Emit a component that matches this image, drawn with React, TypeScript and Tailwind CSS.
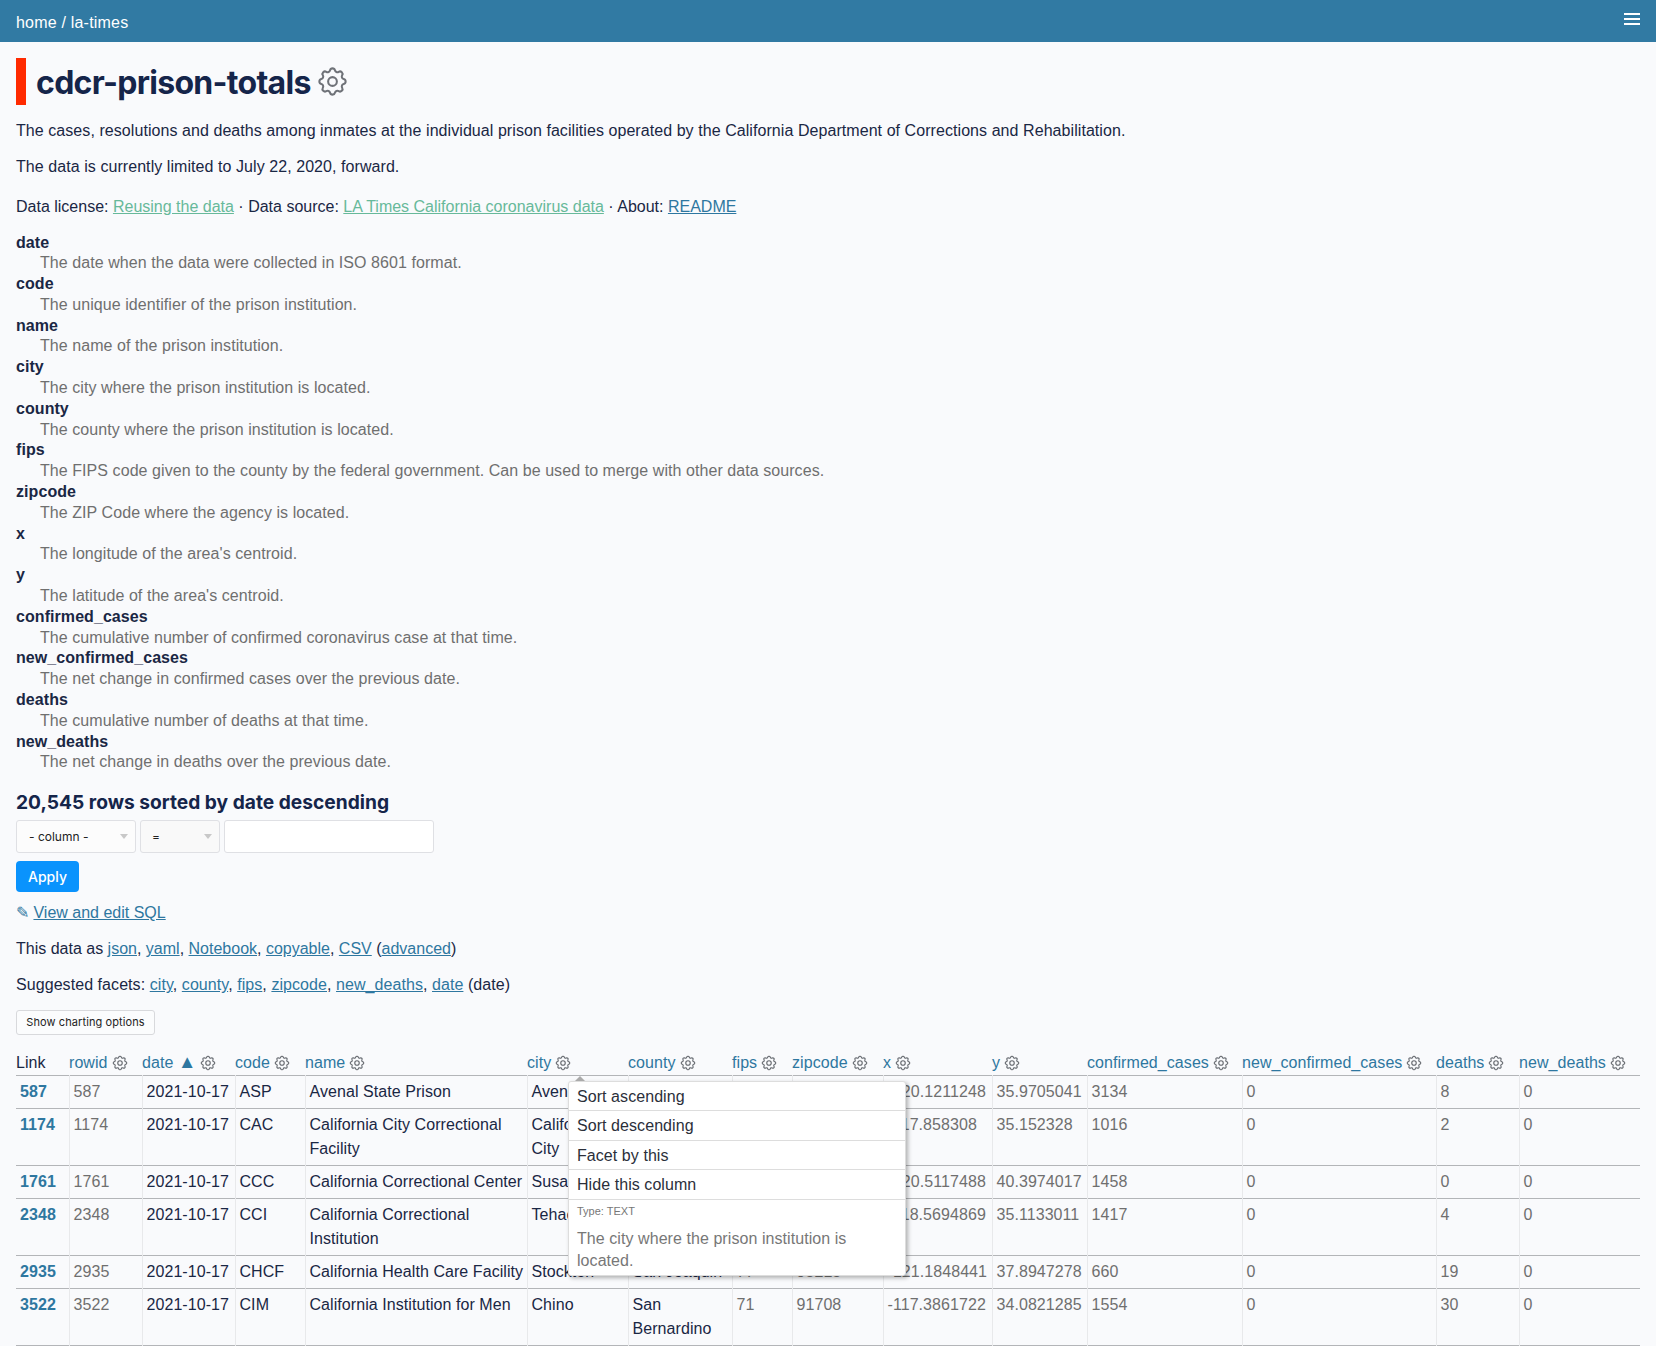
import React from "react";

const Gear = ({ className, sw = 1.5 }: { className: string; sw?: number }) => (
  <svg className={className} viewBox="0 0 24 24" fill="none" stroke="currentColor" strokeWidth={sw} strokeLinecap="round" strokeLinejoin="round">
    <path d="M10.325 4.317c.426-1.756 2.924-1.756 3.35 0a1.724 1.724 0 002.573 1.066c1.543-.94 3.31.826 2.37 2.37a1.724 1.724 0 001.065 2.572c1.756.426 1.756 2.924 0 3.35a1.724 1.724 0 00-1.066 2.573c.94 1.543-.826 3.31-2.37 2.37a1.724 1.724 0 00-2.572 1.065c-.426 1.756-2.924 1.756-3.35 0a1.724 1.724 0 00-2.573-1.066c-1.543.94-3.31-.826-2.37-2.37a1.724 1.724 0 00-1.065-2.572c-1.756-.426-1.756-2.924 0-3.35a1.724 1.724 0 001.066-2.573c-.94-1.543.826-3.31 2.37-2.37.996.608 2.296.07 2.572-1.065z" />
    <circle cx="12" cy="12" r="3" />
  </svg>
);

const cols: [string, string][] = [
  ["date", "The date when the data were collected in ISO 8601 format."],
  ["code", "The unique identifier of the prison institution."],
  ["name", "The name of the prison institution."],
  ["city", "The city where the prison institution is located."],
  ["county", "The county where the prison institution is located."],
  ["fips", "The FIPS code given to the county by the federal government. Can be used to merge with other data sources."],
  ["zipcode", "The ZIP Code where the agency is located."],
  ["x", "The longitude of the area's centroid."],
  ["y", "The latitude of the area's centroid."],
  ["confirmed_cases", "The cumulative number of confirmed coronavirus case at that time."],
  ["new_confirmed_cases", "The net change in confirmed cases over the previous date."],
  ["deaths", "The cumulative number of deaths at that time."],
  ["new_deaths", "The net change in deaths over the previous date."],
];

const headers = ["rowid", "date", "code", "name", "city", "county", "fips", "zipcode", "x", "y", "confirmed_cases", "new_confirmed_cases", "deaths", "new_deaths"];
const widths = [53, 73, 93, 70, 222, 101, 104, 60, 91, 109, 95, 155, 194, 83, 121];

const rows = [
  ["587", "587", "2021-10-17", "ASP", "Avenal State Prison", "Avenal", "Kings", "31", "93204", "-120.1211248", "35.9705041", "3134", "0", "8", "0"],
  ["1174", "1174", "2021-10-17", "CAC", "California City Correctional Facility", "California City", "Kern", "29", "93505", "-117.858308", "35.152328", "1016", "0", "2", "0"],
  ["1761", "1761", "2021-10-17", "CCC", "California Correctional Center", "Susanville", "Lassen", "35", "96127", "-120.5117488", "40.3974017", "1458", "0", "0", "0"],
  ["2348", "2348", "2021-10-17", "CCI", "California Correctional Institution", "Tehachapi", "Kern", "29", "93561", "-118.5694869", "35.1133011", "1417", "0", "4", "0"],
  ["2935", "2935", "2021-10-17", "CHCF", "California Health Care Facility", "Stockton", "San Joaquin", "77", "95215", "-121.1848441", "37.8947278", "660", "0", "19", "0"],
  ["3522", "3522", "2021-10-17", "CIM", "California Institution for Men", "Chino", "San Bernardino", "71", "91708", "-117.3861722", "34.0821285", "1554", "0", "30", "0"],
];
const textCols = new Set([2, 3, 4, 5, 6]);

const blue = "text-[#2e77a0] underline";
const green = "text-[#67b99a] underline";

export default function App() {
  return (
    <div className="min-h-[1346px] overflow-hidden bg-[#f9fafc] font-['Liberation_Sans',sans-serif] text-[16px] leading-[24px] tracking-[0.065px] text-[#1a2744]">
      <header className="flex h-[42px] items-center justify-between bg-[#317aa3] px-4 text-white">
        <div className="mt-1 tracking-[0.2px]">home / la-times</div>
        <div className="mb-1 flex w-[16px] flex-col gap-[3px]">
          <span className="h-[2px] bg-white" />
          <span className="h-[2px] bg-white" />
          <span className="h-[2px] bg-white" />
        </div>
      </header>
      <main className="px-4 pt-4">
        <div className="flex h-[47px] items-center border-l-[10px] border-[#ff2a00] pl-[10px]">
          <h1 className="mt-[2px] font-['Inter',sans-serif] text-[32px] font-bold leading-[47px] tracking-[-0.7px] text-[#15254a]">cdcr-prison-totals</h1>
          <Gear className="ml-[4px] h-[35px] w-[35px] text-[#6f7278]" sw={1.4} />
        </div>
        <p className="mt-[14px]">The cases, resolutions and deaths among inmates at the individual prison facilities operated by the California Department of Corrections and Rehabilitation.</p>
        <p className="mt-3">The data is currently limited to July 22, 2020, forward.</p>
        <p className="mt-4 tracking-normal">
          Data license: <a className={green}>Reusing the data</a> · Data source: <a className={green}>LA Times California coronavirus data</a> · About: <a className={blue}>README</a>
        </p>
        <dl className="mt-[13.5px] leading-[20.8px]">
          {cols.map(([k, v]) => (
            <React.Fragment key={k}>
              <dt className="font-bold">{k}</dt>
              <dd className="pl-6 text-[#6f6f6f]">{v}</dd>
            </React.Fragment>
          ))}
        </dl>
        <h3 className="mt-[15px] h-[28px] font-['Inter',sans-serif] text-[19.2px] font-bold leading-[28px] tracking-normal text-[#15254a]">20,545 rows sorted by date descending</h3>
        <div className="mt-1 flex gap-1">
          <div className="relative flex h-[33px] w-[120px] items-center rounded-[3px] border border-[#dfe0e4] bg-[#fcfcfc] pl-[12px] font-['Inter',sans-serif] text-[12px] tracking-normal text-[#222]">
            - column -
            <span className="absolute right-[7px] top-[13px] h-0 w-0 border-x-[4.5px] border-t-[5px] border-x-transparent border-t-[#c8c8c8]" />
          </div>
          <div className="relative flex h-[33px] w-[80px] items-center rounded-[3px] border border-[#dfe0e4] bg-[#f9f9f9] pl-[11px] font-['Inter',sans-serif] text-[12px] tracking-normal text-[#222]">
            =
            <span className="absolute right-[7px] top-[13px] h-0 w-0 border-x-[4.5px] border-t-[5px] border-x-transparent border-t-[#c8c8c8]" />
          </div>
          <div className="h-[33px] w-[210px] rounded-[3px] border border-[#dfe0e4] bg-white" />
        </div>
        <button className="mt-[8px] block h-[31px] w-[63px] rounded-[4px] bg-[#0a93fd] text-center font-['Inter',sans-serif] text-[14px] font-medium leading-[31px] tracking-normal text-white">Apply</button>
        <p className="mt-[9px] tracking-normal">
          <span className="text-[#2e77a0]">✎ </span><a className={blue}>View and edit SQL</a>
        </p>
        <p className="mt-3 tracking-normal">
          This data as <a className={blue}>json</a>, <a className={blue}>yaml</a>, <a className={blue}>Notebook</a>, <a className={blue}>copyable</a>, <a className={blue}>CSV</a> (<a className={blue}>advanced</a>)
        </p>
        <p className="mt-3">
          Suggested facets: <a className={blue}>city</a>, <a className={blue}>county</a>, <a className={blue}>fips</a>, <a className={blue}>zipcode</a>, <a className={blue}>new_deaths</a>, <a className={blue}>date</a> (date)
        </p>
        <button className="mt-[13px] block h-[25px] w-[139px] rounded-[3px] border border-[#d8d9dc] bg-[#fbfcfd] font-['Inter',sans-serif] text-[11px] leading-[23px] tracking-[0.1px] text-[#222]">Show charting options</button>
        <div className="relative mt-[10px] w-[1624px]">
          <table className="w-full table-fixed border-collapse text-left">
            <colgroup>
              {widths.map((w, i) => (
                <col key={i} style={{ width: w }} />
              ))}
            </colgroup>
            <thead>
              <tr className="h-[30px] border-b border-[#b3b5b8]">
                <th className="p-0 align-bottom font-normal">Link</th>
                {headers.map((h) => (
                  <th key={h} className="whitespace-nowrap p-0 align-bottom font-normal">
                    <span className="text-[#2e77a0]">
                      {h}
                      {h === "date" ? <> <span className="text-[18.5px] leading-[0]">▲</span></> : null}
                    </span>
                    <Gear className="ml-[3px] inline-block h-[18px] w-[18px] align-[-4px] text-[#666a70]" />
                  </th>
                ))}
              </tr>
            </thead>
            <tbody>
              {rows.map((r) => (
                <tr key={r[0]} className="border-b border-[#b3b5b8]">
                  {r.map((c, i) => (
                    <td
                      key={i}
                      className={
                        i === 0
                          ? "border-r border-[#e8e9eb] p-1 align-top font-bold text-[#2e77a0]"
                          : i === 14
                            ? "p-1 align-top text-[#6f6f6f]"
                            : i === 4
                              ? "border-r border-[#e8e9eb] py-1 pl-1 pr-0 align-top text-[#1a2744]"
                              : textCols.has(i)
                                ? "border-r border-[#e8e9eb] p-1 align-top text-[#1a2744]"
                                : "border-r border-[#e8e9eb] p-1 align-top text-[#6f6f6f]"
                      }
                    >
                      {c}
                    </td>
                  ))}
                </tr>
              ))}
            </tbody>
          </table>
          <div className="absolute left-[552px] top-[35.5px] w-[338px] rounded-[3px] border border-[#ddd] bg-white shadow-[2px_2px_4px_rgba(0,0,0,0.3)]">
            <span className="absolute left-[6px] top-[-6px] h-0 w-0 border-x-[5px] border-b-[5px] border-x-transparent border-b-[#aaa]" />
            {["Sort ascending", "Sort descending", "Facet by this", "Hide this column"].map((t) => (
              <div key={t} className="h-[29.5px] border-b border-[#ddd] pl-2 text-[16px] leading-[30px] text-[#2b2f3a]">{t}</div>
            ))}
            <div className="px-2 pb-[3px] text-[#777]">
              <div className="pt-[1px] text-[11px] leading-[20px] tracking-normal">Type: TEXT</div>
              <div className="mt-[7px] leading-[22px]">The city where the prison institution is located.</div>
            </div>
          </div>
        </div>
      </main>
    </div>
  );
}
